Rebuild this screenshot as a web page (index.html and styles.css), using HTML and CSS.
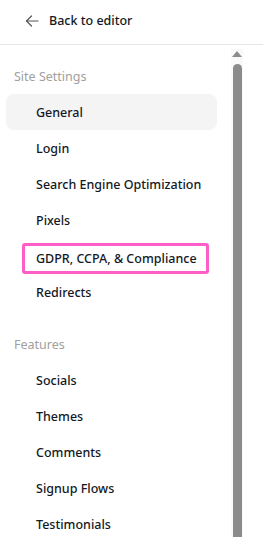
FILE: index.html
```html
<!DOCTYPE html>
<html lang="en">
<head>
  <meta charset="UTF-8">
  <meta name="viewport" content="width=device-width, initial-scale=1.0">
  <title>Site Settings</title>
  <link rel="stylesheet" href="styles.css">
</head>
<body>
  <div class="page">
    <header class="top-bar">
      <a class="back-link" href="#">
        <svg class="back-icon" width="14" height="12" viewBox="0 0 14 12" fill="none" stroke="#555" stroke-width="1.2" stroke-linecap="round" stroke-linejoin="round">
          <path d="M13 6H1.5"/>
          <path d="M6.5 1L1.5 6l5 5"/>
        </svg>
        <span>Back to editor</span>
      </a>
    </header>

    <div class="body-row">
      <nav class="side-nav">
        <div class="nav-section">
          <h3 class="nav-title">Site Settings</h3>
          <ul class="nav-list">
            <li class="nav-item nav-item_active">General</li>
            <li class="nav-item">Login</li>
            <li class="nav-item">Search Engine Optimization</li>
            <li class="nav-item">Pixels</li>
            <li class="nav-item"><span class="nav-mark">GDPR, CCPA, &amp; Compliance</span></li>
            <li class="nav-item">Redirects</li>
          </ul>
        </div>
        <div class="nav-section">
          <h3 class="nav-title">Features</h3>
          <ul class="nav-list">
            <li class="nav-item">Socials</li>
            <li class="nav-item">Themes</li>
            <li class="nav-item">Comments</li>
            <li class="nav-item">Signup Flows</li>
            <li class="nav-item">Testimonials</li>
          </ul>
        </div>
      </nav>

      <div class="scroll-track">
        <span class="scroll-arrow"></span>
        <span class="scroll-thumb"></span>
      </div>
    </div>
  </div>
</body>
</html>
```

FILE: styles.css
```css
* {
  margin: 0;
  padding: 0;
  box-sizing: border-box;
}

html,
body {
  height: 100%;
  overflow: hidden;
}

body {
  font-family: "Noto Sans", "Open Sans", sans-serif;
  font-size: 12.5px;
  font-weight: 500;
  color: #131824;
  background-color: #fff;
}

.page {
  height: 100%;
  display: flex;
  flex-direction: column;
}

.top-bar {
  height: 45px;
  flex-shrink: 0;
  display: flex;
  align-items: center;
  padding-left: 25px;
  border-bottom: 1px solid #e6e6e6;
}

.back-link {
  display: flex;
  align-items: center;
  gap: 10px;
  color: #131824;
  text-decoration: none;
  margin-top: -3px;
}

.body-row {
  flex: 1;
  display: flex;
  min-height: 0;
}

.side-nav {
  width: 231px;
  padding: 21px 14px 0 6px;
  display: flex;
  flex-direction: column;
  gap: 24px;
}

.nav-title {
  font-size: 12.5px;
  font-weight: 400;
  line-height: 20px;
  color: #a0a0a0;
  padding: 1px 0 0 8px;
  margin-bottom: 7px;
}

.nav-list {
  list-style-type: none;
}

.nav-item {
  height: 36px;
  display: flex;
  align-items: center;
  padding-left: 30px;
  border-radius: 8px;
  white-space: nowrap;
  cursor: pointer;
}

.nav-item_active {
  background-color: #f4f4f4;
}

/* annotation box drawn round one entry */
.nav-mark {
  display: inline-block;
  line-height: 19px;
  padding: 3px 9px 3px 11px;
  margin-left: -14px;
  margin-top: 5px;
  border: 3px solid #ff5ec9;
  border-radius: 3px;
}

.scroll-track {
  width: 12px;
  margin-top: 4px;
  background-color: #f9f9f9;
  display: flex;
  flex-direction: column;
  align-items: center;
}

.scroll-arrow {
  width: 0;
  height: 0;
  margin-top: 2px;
  border-left: 5px solid transparent;
  border-right: 5px solid transparent;
  border-bottom: 6px solid #8b8b8b;
}

.scroll-thumb {
  flex: 1;
  width: 9px;
  margin-top: 7px;
  background-color: #8b8b8b;
  border-radius: 5px 5px 0 0;
}
```
